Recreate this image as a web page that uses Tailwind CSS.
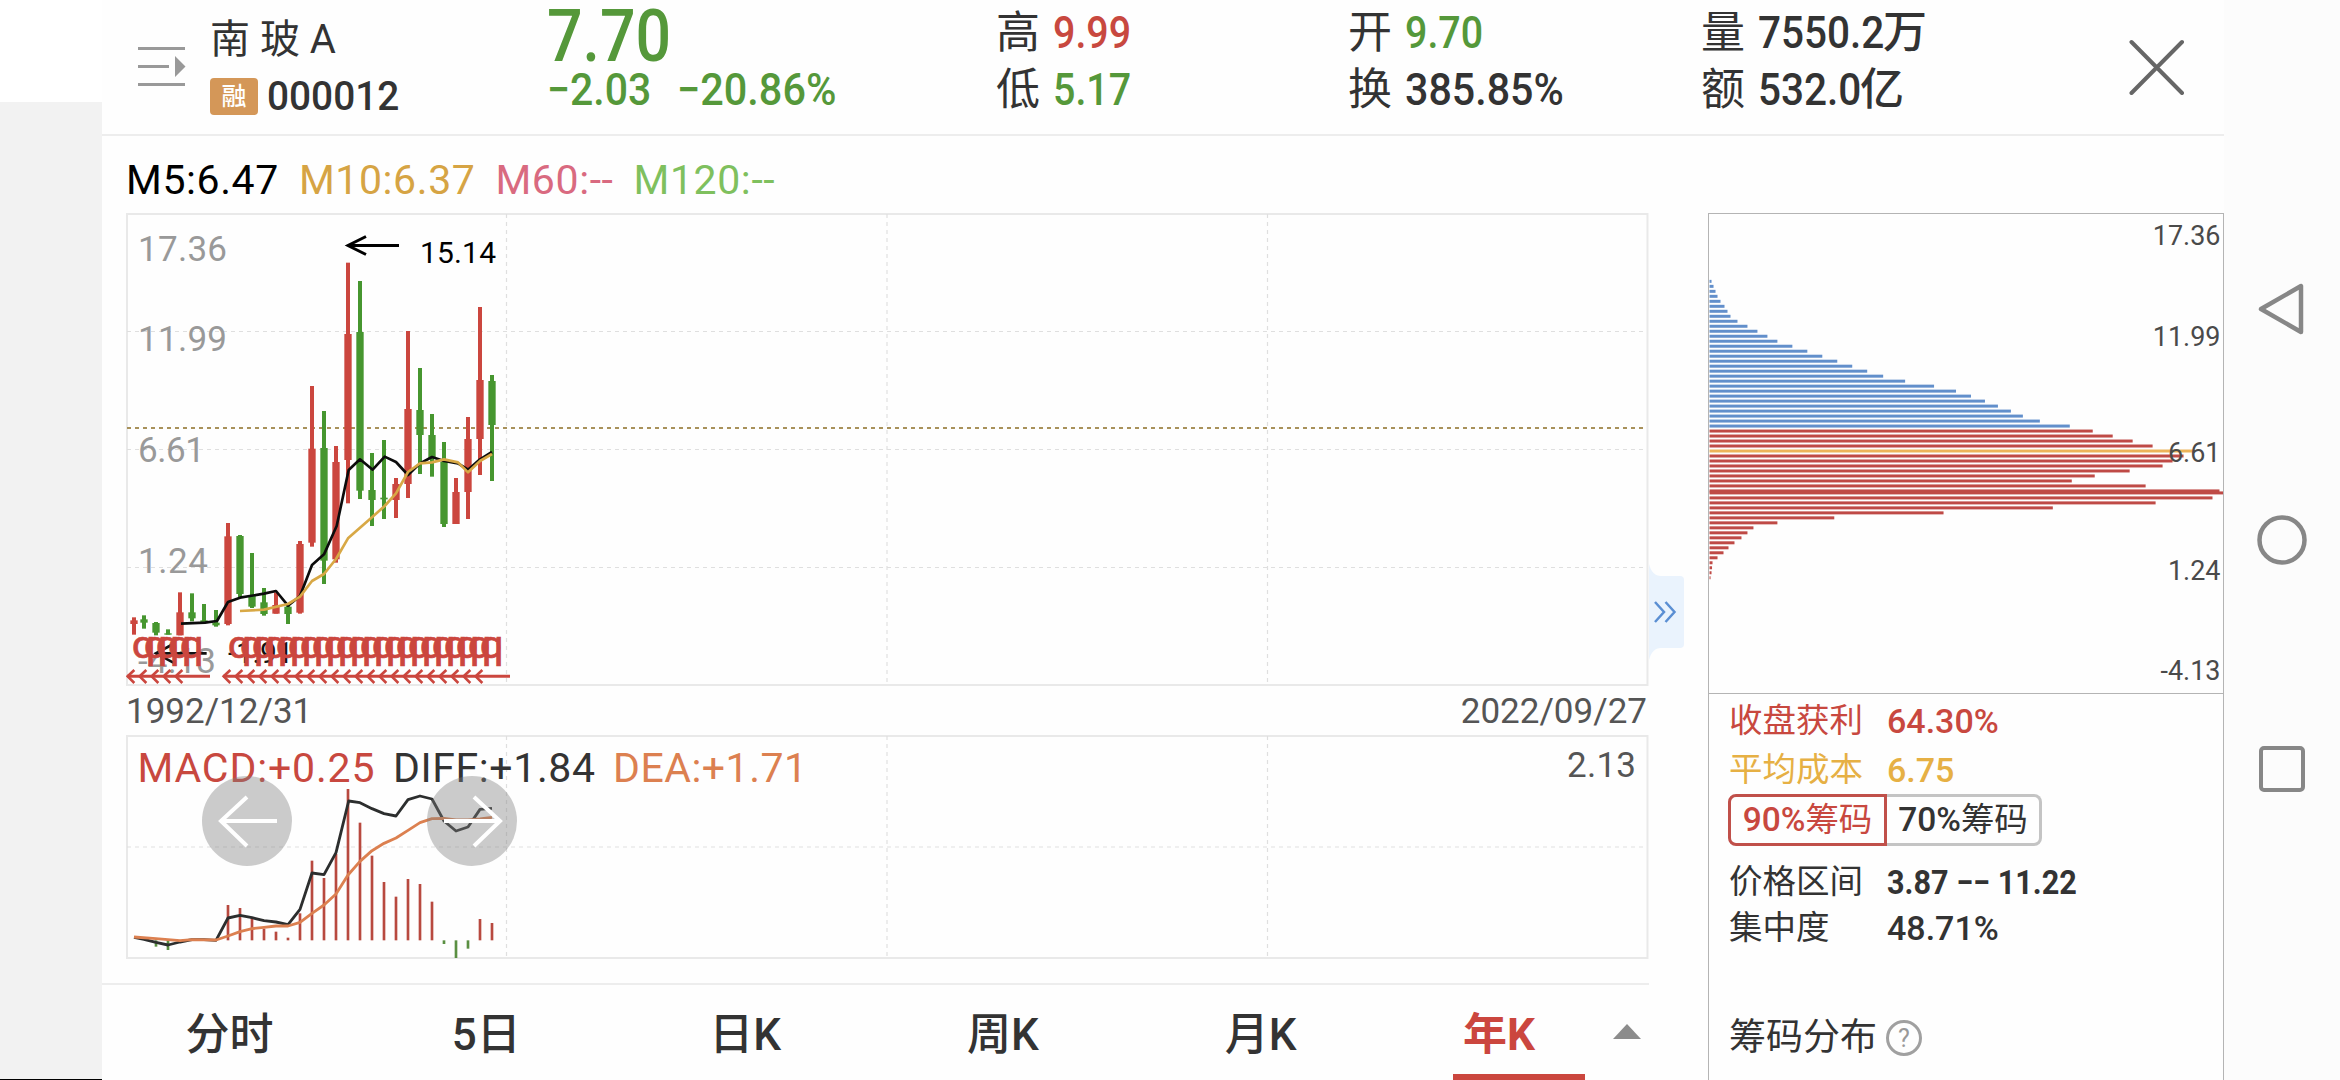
<!DOCTYPE html>
<html lang="zh-CN">
<head>
<meta charset="utf-8">
<title>南玻A 000012 年K</title>
<script src="https://cdn.jsdelivr.net/npm/@tailwindcss/browser@4"></script>
</head>
<body class="flex h-[1080px] w-[2340px] overflow-hidden bg-[#fefefe] font-[Roboto,'Noto_Sans_CJK_SC',sans-serif] text-[#333] whitespace-nowrap">

<aside class="flex w-[102px] shrink-0 flex-col">
  <div class="h-[102px] bg-white"></div>
  <div class="flex-1 border-b border-black bg-[#f2f2f2]"></div>
</aside>

<main class="flex w-[2122px] shrink-0 flex-col">
  <header class="flex h-[136px] shrink-0 border-b-2 border-[#ededed]">
    <div class="flex w-[108px] shrink-0 pt-[45px] pl-9">
      <svg class="h-11 w-12" viewBox="0 0 48 44" fill="#999"><path d="M0 2h47v3H0zM0 20h31v3H0zM0 38h47v3H0zM37 11l10.500 10.500L37 32z"/></svg>
    </div>
    <div class="w-[337px] shrink-0 pt-[12px]">
      <div class="h-[56px] text-[40px] leading-[56px]">南 玻 A</div>
      <div class="flex h-[57px] items-center gap-[9px]">
        <span class="flex h-[37px] w-12 items-center justify-center rounded bg-[#d49758] text-[25px] font-medium text-white">融</span>
        <span class="origin-left text-[40px] leading-[57px] font-medium scale-x-[0.97]">000012</span>
      </div>
    </div>
    <div class="w-[449px] shrink-0 pt-[4px] text-[#55983a]">
      <div class="h-[57px] w-max origin-left scale-x-[0.87] text-[72px] leading-[65px] font-medium">7.70</div>
      <div class="flex h-[58px] text-[45px] leading-[58px] font-medium">
        <span class="w-[130px] origin-left"><span class="inline-block origin-left scale-x-[0.91]">−2.03</span></span>
        <span class="inline-block origin-left scale-x-[0.92]">−20.86%</span>
      </div>
    </div>
    <div class="w-[352px] shrink-0 pt-[4px] text-[44px] leading-[58px]">
      <div class="flex h-[57px]"><span class="w-[57px]">高</span><span class="origin-left scale-x-[0.875] text-[45px] font-medium text-[#c8483f]">9.99</span></div>
      <div class="flex h-[58px]"><span class="w-[57px]">低</span><span class="origin-left scale-x-[0.875] text-[45px] font-medium text-[#55983a]">5.17</span></div>
    </div>
    <div class="w-[353px] shrink-0 pt-[4px] text-[44px] leading-[58px]">
      <div class="flex h-[57px]"><span class="w-[57px]">开</span><span class="origin-left scale-x-[0.875] text-[45px] font-medium text-[#55983a]">9.70</span></div>
      <div class="flex h-[58px]"><span class="w-[57px]">换</span><span class="origin-left scale-x-[0.915] text-[45px] font-medium">385.85%</span></div>
    </div>
    <div class="w-[428px] shrink-0 pt-[4px] text-[44px] leading-[58px]">
      <div class="flex h-[57px]"><span class="w-[57px]">量</span><span class="w-[125px]"><span class="inline-block origin-left scale-x-[0.9] text-[45px] font-medium">7550.2</span></span><span class="font-medium">万</span></div>
      <div class="flex h-[58px]"><span class="w-[57px]">额</span><span class="w-[102px]"><span class="inline-block origin-left scale-x-[0.9] text-[45px] font-medium">532.0</span></span><span class="font-medium">亿</span></div>
    </div>
    <svg class="mt-[39px] h-14 w-14 shrink-0" viewBox="0 0 56 56" fill="none" stroke="#666" stroke-width="4" stroke-linecap="round"><path d="M2.500 3L53 54M53 3L2.500 54"/></svg>
  </header>

  <div class="flex h-[944px]">
    <section class="flex w-[1547px] shrink-0 flex-col">
      <div class="flex h-[77px] shrink-0 items-center gap-[20px] pt-[13px] pl-6 text-[41px] tracking-[0.6px]">
        <span class="text-black">M5:6.47</span><span class="text-[#d6a444]">M10:6.37</span><span class="text-[#d96a80]">M60:--</span><span class="text-[#7fc05e]">M120:--</span>
      </div>

      <svg class="ml-[24px] h-[473px] w-[1523px] shrink-0" viewBox="126 213 1523 473" font-family="Roboto, sans-serif">
        <rect x="127" y="214" width="1520.500" height="471" fill="none" stroke="#e9e9e9" stroke-width="2"/>
        <g stroke="#dfdfdf" stroke-width="1.200" stroke-dasharray="4 4">
          <path d="M506.500 214V685M887 214V685M1267.500 214V685M127 331.500H1647M127 449.500H1647M127 567.500H1647"/>
        </g>
        <path d="M127 428H1647" stroke="#a8915a" stroke-width="2" stroke-dasharray="4 4"/>
        <g fill="#999" font-size="35">
          <text x="138" y="260.500" textLength="89">17.36</text>
          <text x="138" y="350.500" textLength="89">11.99</text>
          <text x="138" y="461.500" textLength="67">6.61</text>
          <text x="138" y="572.500" textLength="70">1.24</text>
          <text x="138" y="672.500" textLength="78">-4.13</text>
        </g>
        <g transform="translate(110 440) scale(0.333333)">
          <g id="candles"></g>
          <polyline fill="none" stroke="#0c0c0c" stroke-width="8" stroke-linejoin="round" points="213,551 285,548 321,543 354,486 390,473 462,461 498,453 534,497 570,468 606,375 642,343 680,258 716,90 750,58 788,89 824,50 858,66 894,105 930,70 966,51 1002,63 1044,70 1074,89 1110,58 1146,36"/>
          <polyline fill="none" stroke="#d8a845" stroke-width="8" stroke-linejoin="round" points="390,513 462,509 534,492 570,470 606,423 642,402 678,357 714,295 786,232 824,198 858,160 894,96 930,70 966,67 1002,58 1044,67 1074,97 1110,63 1146,42"/>
          <path d="M290 640H138M190 612L138 640L190 668" fill="none" stroke="#111" stroke-width="8"/>
          <text x="354" y="668" font-size="90" textLength="196" fill="#111">-1.91</text>
          <g id="rights" fill="#cb463e" stroke="#cb463e"></g>
        </g>
        <path d="M399 245.500H348M366 236.500L348 245.500L366 254.500" fill="none" stroke="#000" stroke-width="3"/>
        <text x="420" y="263" font-size="30" textLength="76" fill="#000">15.14</text>
      </svg>

      <div class="flex h-[49px] shrink-0 items-center justify-between pt-[4px] pr-[2px] pl-6 text-[35px] text-[#555]">
        <span>1992/12/31</span><span>2022/09/27</span>
      </div>

      <svg class="ml-[24px] h-[224px] w-[1523px] shrink-0" viewBox="126 735 1523 224" font-family="Roboto, sans-serif">
        <rect x="127" y="736" width="1520.500" height="222" fill="none" stroke="#e9e9e9" stroke-width="2"/>
        <path d="M506.500 736V958M887 736V958M1267.500 736V958M127 847H1647" stroke="#dfdfdf" stroke-width="1.200" stroke-dasharray="4 4"/>
        <g font-size="41">
          <text x="137.500" y="782" textLength="237" fill="#c8483f">MACD:+0.25</text>
          <text x="393" y="782" textLength="202" fill="#333">DIFF:+1.84</text>
          <text x="613" y="782" textLength="194" fill="#dc8050">DEA:+1.71</text>
        </g>
        <text x="1567" y="776.500" font-size="35" textLength="69" fill="#555">2.13</text>
        <g transform="translate(110 700) scale(0.333333)" fill="none" stroke-linejoin="round">
          <g id="macd" stroke-width="8"></g>
          <polyline stroke="#2c2e2e" stroke-width="8.500" points="72,712 102,718 138,727 174,735 210,726 246,719 282,719 318,721 354,654 390,646 426,653 462,662 498,666 534,674 570,628 606,519 642,524 678,458 716,303 750,308 786,326 822,341 858,348 894,299 930,288 966,297 1002,363 1038,393 1074,381 1110,328 1146,325"/>
          <polyline stroke="#dc8050" stroke-width="8.500" points="72,711 138,716 174,719 210,722 246,719 318,720 354,708 390,695 426,686 462,682 498,678 534,678 570,667 606,640 642,615 678,582 714,525 750,484 786,452 822,430 858,414 894,391 930,368 966,356 1002,355 1038,360 1074,360 1110,357 1146,352"/>
        </g>
        <g fill="#808080" fill-opacity="0.4"><circle cx="247" cy="821" r="45"/><circle cx="472" cy="821" r="45"/></g>
        <path d="M277 821H221M247 797L221 821L247 846M444 821H500M474 797L500 821L474 846" fill="none" stroke="#fff" stroke-width="4"/>
      </svg>

      <nav class="mt-6 flex h-[97px] border-t-2 border-[#ededed] text-[44px] font-medium">
        <div class="flex w-1/6 items-center justify-center pt-[4px] pr-[3px]">分时</div>
        <div class="flex w-1/6 items-center justify-center pt-[4px] pr-[5px]">5日</div>
        <div class="flex w-1/6 items-center justify-center pt-[4px] pr-[3px]">日K</div>
        <div class="flex w-1/6 items-center justify-center pt-[4px] pr-[3px]">周K</div>
        <div class="flex w-1/6 items-center justify-center pt-[4px] pr-[3px]">月K</div>
        <div class="relative flex w-1/6 items-center justify-center pt-[4px] pr-[42px] font-bold text-[#cb463e]">年K
          <span class="absolute bottom-0 left-[62px] h-[6px] w-[132px] bg-[#cb463e]"></span>
          <svg class="absolute top-[39px] right-[8px] h-[15px] w-7" viewBox="0 0 28 15"><path d="M14 0L28 15H0z" fill="#8c8c8c"/></svg>
        </div>
      </nav>
    </section>

    <div class="w-[59px] shrink-0 pt-[428px]">
      <svg class="h-[96px] w-[36px]" viewBox="0 0 36 96"><path d="M0 0C2 8 6 12 12 12H31Q35 12 35 16V80Q35 84 31 84H12C6 84 2 88 0 96Z" fill="#eaf3fd"/><path d="M6 38l9 10-9 10M16.500 38l9 10-9 10" fill="none" stroke="#5b8fd3" stroke-width="2.500"/></svg>
    </div>

    <section class="mt-[77px] flex w-[516px] shrink-0 flex-col border border-b-0 border-[#b4b4b4]">
      <svg class="h-[480px] w-[514px] shrink-0 border-b border-[#b4b4b4]" viewBox="1709 213 514 480" font-family="Roboto, sans-serif">
        <g id="chips"></g>
        <g fill="#4a4a4a" font-size="27" text-anchor="end">
          <text x="2221" y="244">17.36</text><text x="2221" y="345">11.99</text><text x="2221" y="462">6.61</text><text x="2221" y="579.500">1.24</text><text x="2221" y="680">-4.13</text>
        </g>
      </svg>
      <div class="flex flex-1 flex-col pl-5 text-[33.5px] leading-[48px]">
        <div class="mt-[3px] flex h-[48px] text-[#c8483f]"><span class="w-[158px]">收盘获利</span><span class="text-[34px] font-medium">64.30%</span></div>
        <div class="mt-[1px] flex h-[48px] text-[#e6b044]"><span class="w-[158px]">平均成本</span><span class="text-[34px] font-medium">6.75</span></div>
        <div class="-ml-[1px] flex h-[52px] leading-[50px]">
          <div class="flex w-[159px] items-center justify-center rounded-l-lg border-3 border-[#c0504a] text-[#c8483f]"><span class="font-medium">90%</span>筹码</div>
          <div class="flex w-[155px] items-center justify-center rounded-r-lg border-3 border-l-0 border-[#c4c4c4]"><span class="font-medium">70%</span>筹码</div>
        </div>
        <div class="mt-[13px] flex h-[46px] leading-[46px]"><span class="w-[158px]">价格区间</span><span class="origin-left scale-x-[0.9] text-[34px] font-bold">3.87 −− 11.22</span></div>
        <div class="flex h-[46px] leading-[46px]"><span class="w-[158px]">集中度</span><span class="text-[34px] font-medium">48.71%</span></div>
        <div class="mt-[47px] flex h-[80px] items-center gap-[9px] text-[37px] leading-[80px]">筹码分布
          <span class="flex h-9 w-9 items-center justify-center rounded-full border-3 border-[#a0a0a0] text-[25px] leading-none text-[#999]">?</span>
        </div>
      </div>
    </section>
  </div>
</main>

<aside class="flex flex-1 flex-col items-center bg-[#fcfcfc]">
  <svg class="mt-[282px] mr-[2px] h-[54px] w-[50px]" viewBox="0 0 50 54" fill="none" stroke="#878787" stroke-width="4.500" stroke-linejoin="round"><path d="M45 4V50L5 27Z"/></svg>
  <svg class="mt-[178px] h-[52px] w-[52px]" viewBox="0 0 52 52" fill="none" stroke="#878787" stroke-width="4.500"><circle cx="26" cy="26" r="22.500"/></svg>
  <div class="mt-[180px] h-[46px] w-[46px] rounded-[5px] border-4 border-[#878787]"></div>
</aside>

<script>
const NS = 'http://www.w3.org/2000/svg';
function add(parent, tag, attrs, text) {
  const el = document.createElementNS(NS, tag);
  for (const k in attrs) el.setAttribute(k, attrs[k]);
  if (text) el.textContent = text;
  parent.appendChild(el);
}
const RED = '#cb463e', GREEN = '#46962f';

// x, rising?, high, low, body top, body bottom
const candles = [
  [72,1,532,584,541,552],[102,0,526,566,538,548],[138,0,546,586,549,578],[174,0,568,584,580,584],
  [210,1,457,586,517,586],[246,0,460,544,517,535],[282,0,492,550,541,548],[318,0,510,560,548,556],
  [354,1,249,556,289,552],[390,0,285,474,288,462],[426,0,339,504,468,500],[462,0,444,527,487,522],
  [498,1,457,521,495,521],[534,0,490,552,500,522],[570,1,303,521,312,518],[606,1,-162,320,26,308],
  [642,0,-87,432,24,362],[678,1,18,368,66,358],[714,1,-532,190,-318,60],[750,0,-477,177,-324,152],
  [786,0,39,258,150,180],[822,0,0,237,173,178],[858,1,114,234,132,180],[894,1,-327,174,-93,132],
  [930,0,-216,102,-90,-15],[966,0,-78,110,-15,55],[1002,0,6,261,66,252],[1038,1,114,252,156,252],
  [1074,1,-69,237,-3,156],[1110,1,-399,105,-180,-3],[1146,0,-195,123,-177,-45]
];
const cg = document.getElementById('candles');
for (const [x, up, hi, lo, t, b] of candles) {
  const fill = up ? RED : GREEN;
  add(cg, 'rect', {x: x - 6, y: hi, width: 12, height: lo - hi, fill});
  add(cg, 'rect', {x: x - 11, y: t, width: 22, height: b - t, fill});
}

// ex-rights markers
const rg = document.getElementById('rights');
for (const [start, count, end] of [[51, 5, 300], [339, 22, 1200]]) {
  add(rg, 'path', {d: `M${start} 709H${end}`, 'stroke-width': 9, fill: 'none'});
  for (let i = 0; i < count; i++) {
    const x = start + 36 * i;
    add(rg, 'path', {d: `M${x + 22} 690L${x + 2} 709L${x + 22} 729`, 'stroke-width': 8, fill: 'none'});
    add(rg, 'text', {x: x + 14, y: 654, 'font-size': 116, textLength: 72, lengthAdjust: 'spacingAndGlyphs', 'stroke-width': 2}, 'q');
  }
}

// x, bar end (zero line at 720)
const macd = [[138,740],[174,750],[354,615],[390,624],[426,654],[462,686],[498,695],[534,713],[570,640],[606,482],[642,534],[678,462],[714,267],[750,368],[786,467],[822,546],[858,590],[894,537],[930,552],[966,605],[1002,732],[1038,774],[1074,746],[1110,657],[1146,669]];
const mg = document.getElementById('macd');
for (const [x, y] of macd) add(mg, 'path', {d: `M${x} 721V${y}`, stroke: y > 720 ? '#5a8f42' : '#b8493f'});

// chip distribution, y and length of each bar
const blue = [2,4,6,8,11,15,18,21,28,38,48,58,68,83,98,113,128,143,158,174,196,225,247,262,276,289,302,314,331,361];
const red = [[430.5,384],[435.5,404],[440.5,424],[445.5,444],[455,475],[460,464],[465,454],[470,421],[475,386],[480,363],[485,437],[490,511],[492,515],[497,504],[502,447],[507,344],[512,234.500],[517,125],[522,68],[527,44],[532,38],[537,32],[542,25],[547,19],[552,14],[557,8],[562,3],[567,2.500],[572,2],[577,1]];
const hg = document.getElementById('chips');
blue.forEach((w, i) => add(hg, 'rect', {x: 1709, y: 279 + 5 * i, width: w, height: 3, fill: '#628fcb'}));
for (const [y, w] of red) add(hg, 'rect', {x: 1709, y: Math.round(y - 1.5), width: w, height: 3, fill: '#bf4a46'});
add(hg, 'rect', {x: 1709, y: 449, width: 486, height: 3, fill: '#ecb45a'});
</script>
</body>
</html>
